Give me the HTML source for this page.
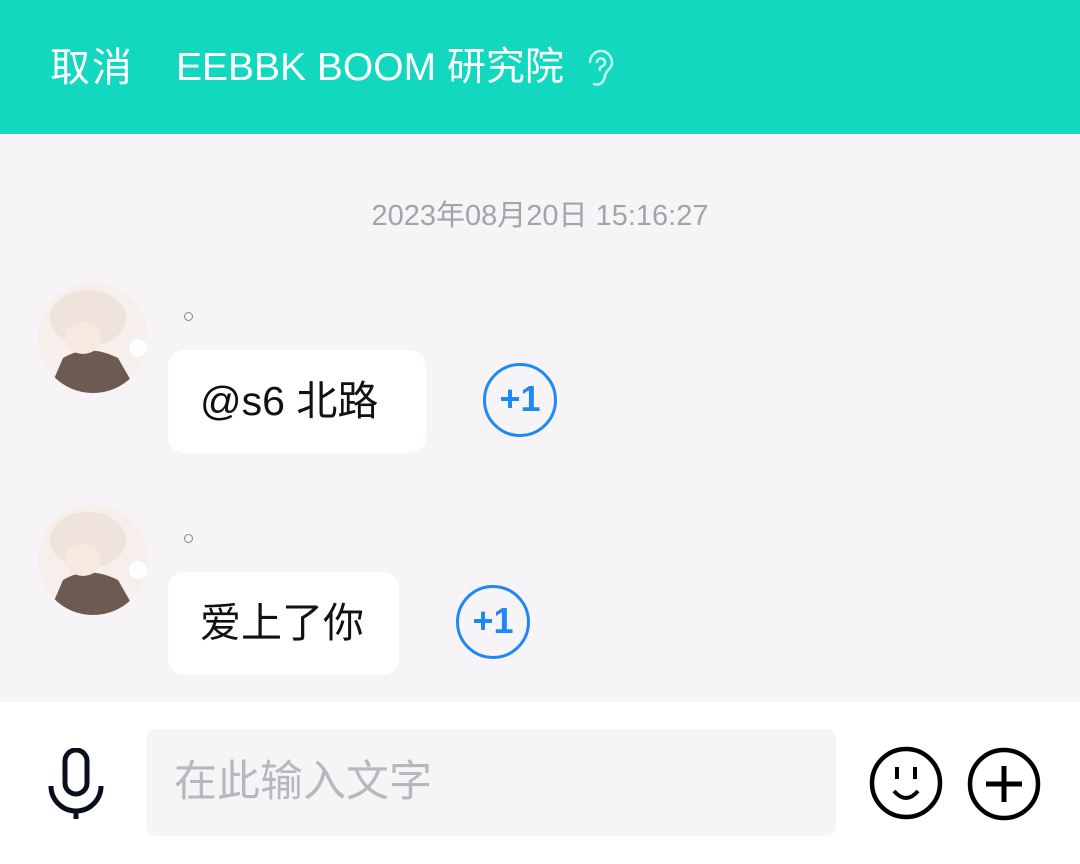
<!DOCTYPE html>
<html><head><meta charset="utf-8"><style>
body{margin:0;width:1080px;height:864px;overflow:hidden;background:#f7f4f8;font-family:"Liberation Sans","Noto Sans CJK SC",sans-serif;position:relative}
.hd{position:absolute;left:0;top:0;width:1080px;height:134px;background:#12d8c0;color:#fff;font-size:40px}
.hd span{position:absolute;top:43px;line-height:50px;white-space:nowrap}
.ts{position:absolute;top:192px;width:1080px;text-align:center;color:#a5a3a8;font-size:29px}
.av{position:absolute;left:38px;width:110px;height:110px;border-radius:50%;overflow:hidden;background:#f6efec}
.dot{position:absolute;left:184px;width:7px;height:7px;border:1.5px solid #888;border-radius:50%}
.bb{position:absolute;left:168px;height:103px;background:#fff;border-radius:16px;font-size:41px;color:#111;line-height:103px;padding:0 32px;box-sizing:border-box;white-space:nowrap}
.p1{position:absolute;width:68px;height:68px;border:3px solid #1e88f5;border-radius:50%;color:#1e88f5;font-size:36px;font-weight:bold;text-align:center;line-height:66px;box-sizing:content-box}
.ft{position:absolute;left:0;top:702px;width:1080px;height:162px;background:#fff}
.in{position:absolute;left:146px;top:729px;width:690px;height:107px;background:#f5f5f6;border-radius:10px;color:#bbb5c0;font-size:43px;line-height:107px;padding-left:28px;box-sizing:border-box}
</style></head><body>
<div class="hd"><span style="left:50px;letter-spacing:2px">取消</span><span style="left:176px;font-size:39px">EEBBK BOOM 研究院</span>
<svg style="position:absolute;left:584px;top:46px" width="36" height="44" viewBox="0 0 36 44"><path d="M6 16a11 12 0 1 1 22 2c-1 5-6 6-7 12s-5 10-11 8" fill="none" stroke="#c8f6ef" stroke-width="2.5" stroke-linecap="round"/><path d="M13 16a4 4 0 1 1 7 3c-2 2-5 2-4 5" fill="none" stroke="#c8f6ef" stroke-width="2.5" stroke-linecap="round"/></svg></div>
<div class="ts">2023年08月20日 15:16:27</div>
<div class="av" style="top:283px"><svg width="110" height="110"><ellipse cx="50" cy="35" rx="38" ry="28" fill="#efe3dc"/><path d="M10 110 L25 75 Q50 60 80 75 L100 110Z" fill="#6d5a50"/><ellipse cx="45" cy="55" rx="18" ry="16" fill="#f7e8e0"/><circle cx="100" cy="65" r="9" fill="#fff"/></svg></div>
<div class="dot" style="top:312px"></div>
<div class="bb" style="top:350px;width:258px">@s6 北路</div>
<div class="p1" style="left:483px;top:363px">+1</div>
<div class="av" style="top:505px"><svg width="110" height="110"><ellipse cx="50" cy="35" rx="38" ry="28" fill="#efe3dc"/><path d="M10 110 L25 75 Q50 60 80 75 L100 110Z" fill="#6d5a50"/><ellipse cx="45" cy="55" rx="18" ry="16" fill="#f7e8e0"/><circle cx="100" cy="65" r="9" fill="#fff"/></svg></div>
<div class="dot" style="top:534px"></div>
<div class="bb" style="top:572px;width:231px">爱上了你</div>
<div class="p1" style="left:456px;top:585px">+1</div>
<div class="ft"></div>
<svg style="position:absolute;left:46px;top:748px" width="60" height="72" viewBox="0 0 60 72"><rect x="19" y="2" width="22" height="44" rx="11" fill="none" stroke="#0a0f1e" stroke-width="5"/><path d="M5 38a25 25 0 0 0 50 0M30 63v8" fill="none" stroke="#0a0f1e" stroke-width="5"/></svg>
<div class="in">在此输入文字</div>
<svg style="position:absolute;left:868px;top:745px" width="180" height="80" viewBox="0 0 180 80"><circle cx="38" cy="38" r="34" fill="none" stroke="#000" stroke-width="4.5"/><path d="M29 22v12M47 22v12" stroke="#000" stroke-width="4"/><path d="M26 46q12 14 24 0" fill="none" stroke="#000" stroke-width="4"/><circle cx="136" cy="39" r="34" fill="none" stroke="#000" stroke-width="4.5"/><path d="M136 21v36M118 39h36" stroke="#000" stroke-width="5"/></svg>
</body></html>
